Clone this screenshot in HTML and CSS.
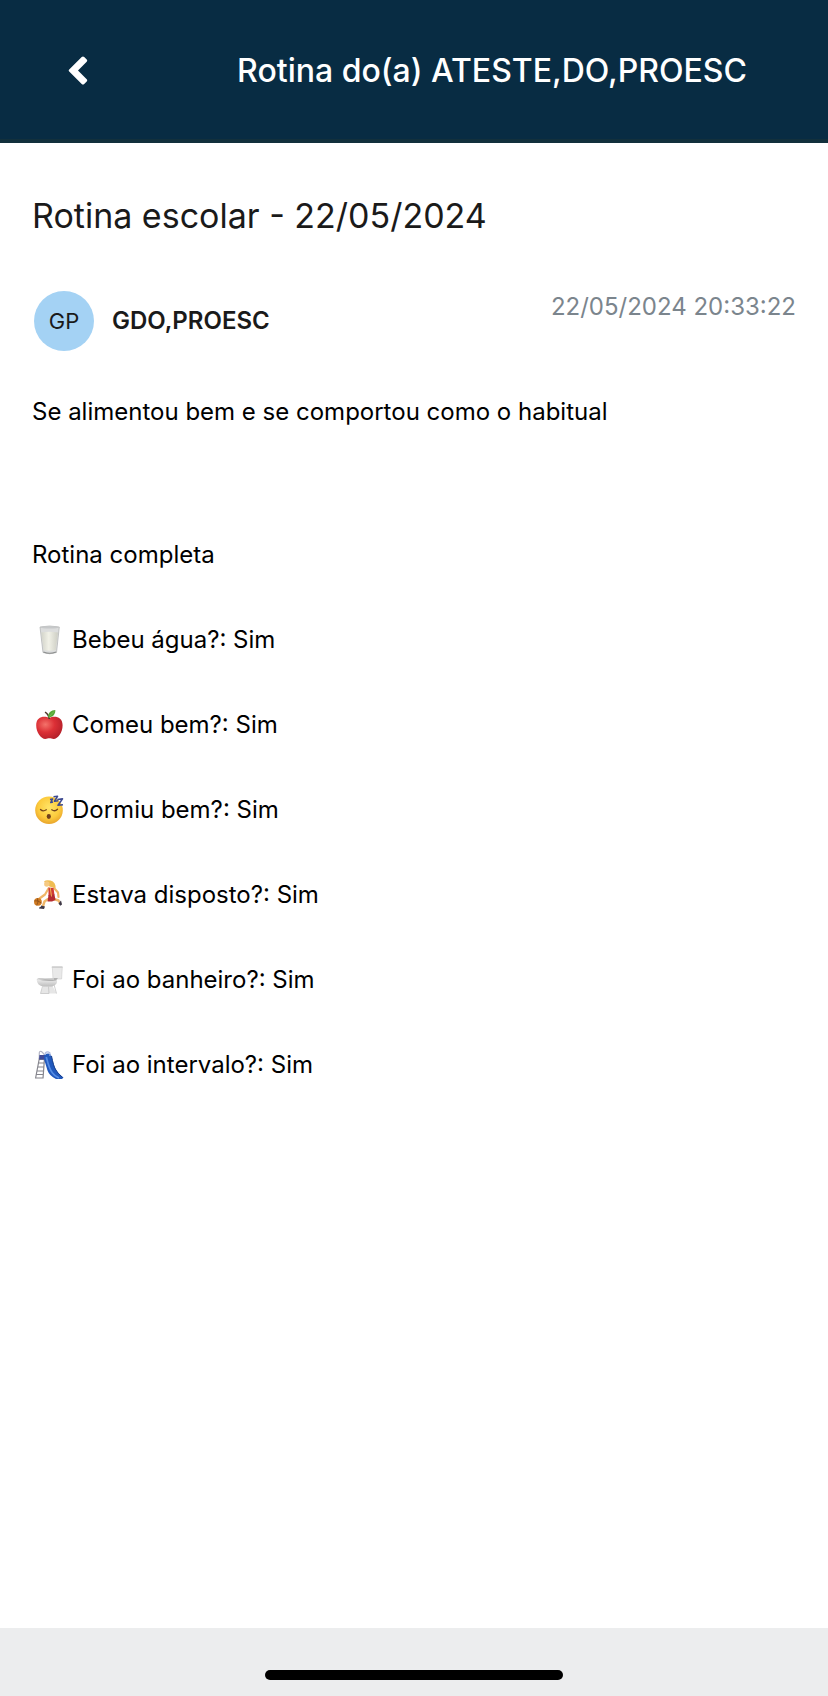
FILE: index.html
```html
<!DOCTYPE html>
<html lang="pt-BR">
<head>
    <meta charset="UTF-8">
    <meta name="viewport" content="width=device-width, initial-scale=1.0">
    <title>Rotina escolar</title>
    <link rel="stylesheet" href="styles.css">
</head>
<body>
    <header class="topbar">
        <button type="button" class="back" aria-label="Voltar">
            <svg width="20" height="30" viewBox="0 0 20 30">
                <path d="M13.700 1Q15 -.2 16.200 1L18.700 3.500Q19.700 4.600 18.700 5.700L10 14.500L18.700 23.300Q19.700 24.400 18.700 25.500L16.200 28Q15 29.200 13.700 28L1.200 15.600Q.2 14.500 1.200 13.400Z" fill="#fff"/>
            </svg>
        </button>
        <h1>Rotina do(a) ATESTE,DO,PROESC</h1>
    </header>

    <main class="content">
        <h2>Rotina escolar - 22/05/2024</h2>

        <div class="author">
            <div class="avatar">GP</div>
            <strong class="name">GDO,PROESC</strong>
            <time class="date" datetime="2024-05-22T20:33:22">22/05/2024 20:33:22</time>
        </div>

        <p class="message">Se alimentou bem e se comportou como o habitual</p>

        <h3>Rotina completa</h3>
        <ul class="routine">
            <li>
                <!-- milk -->
                <svg class="icon" viewBox="0 0 32 32">
                    <defs>
                        <linearGradient id="milk" x1="0" x2="1"><stop offset="0" stop-color="#d2d3c9"/><stop offset=".45" stop-color="#f1f1e7"/><stop offset="1" stop-color="#cdcec4"/></linearGradient>
                    </defs>
                    <path d="M8 3Q17.500 1 27.300 3L24.500 28.500Q17.500 31 11 28.500Z" fill="#dcdddd" stroke="#adafaf" stroke-width=".7"/>
                    <path d="M9.200 8.500Q17.500 7 26 8.500L23.700 26Q17.500 27.500 11.800 26Z" fill="url(#milk)"/>
                    <ellipse cx="17.600" cy="3.300" rx="9.300" ry="1.300" fill="#c6c8c9"/>
                    <path d="M11.500 28Q17.500 30.500 24 28" fill="none" stroke="#8b8d8d" stroke-width="1.200"/>
                </svg>
                Bebeu água?: Sim
            </li>
            <li>
                <!-- apple -->
                <svg class="icon" viewBox="0 0 32 32">
                    <defs>
                        <radialGradient id="apple" cx=".35" cy=".35" r=".7"><stop offset="0" stop-color="#f4726a"/><stop offset=".5" stop-color="#dc3036"/><stop offset="1" stop-color="#b5202a"/></radialGradient>
                    </defs>
                    <path d="M17.300 9C13 6.600 4.200 6.800 4.200 16.300C4.200 23.500 9 30 13.300 30C15 30 15.800 29.300 17.400 29.300C19 29.300 20 30 21.600 30C26 30 30.600 23.500 30.600 16.300C30.600 6.800 21.500 6.600 17.300 9Z" fill="url(#apple)"/>
                    <path d="M13 3.200Q16.500 5 17.300 10" fill="none" stroke="#4e3528" stroke-width="1.500"/>
                    <path d="M16.200 8.500C15.800 3.500 19 1.300 23.300 1C23.600 5 21 8.400 16.200 8.500Z" fill="#57a637"/>
                    <path d="M17.500 7.500Q19.500 5 22 2.500" fill="none" stroke="#83c75a" stroke-width=".7"/>
                </svg>
                Comeu bem?: Sim
            </li>
            <li>
                <!-- sleeping face -->
                <svg class="icon" viewBox="0 0 32 32">
                    <defs>
                        <radialGradient id="face" cx=".5" cy=".4" r=".6"><stop offset="0" stop-color="#ffe466"/><stop offset=".65" stop-color="#fccb3d"/><stop offset="1" stop-color="#e9a52c"/></radialGradient>
                    </defs>
                    <circle cx="17" cy="16.200" r="13.800" fill="url(#face)"/>
                    <path d="M8.500 15.500Q11 18 14.300 15.800M19.800 15.800Q22.800 18 25.500 15.300" fill="none" stroke="#74451b" stroke-width="1.300" stroke-linecap="round"/>
                    <ellipse cx="16.800" cy="22.500" rx="2.100" ry="2.400" fill="#70401c"/>
                    <path d="M18 5.500L20.500 5L18.800 8.500L21 8M21.500 2.800L25.500 2.300L22.500 7.200L26.300 6.700M25.300 5.500L30.500 4.900L26 11.300L31 10.700" fill="none" stroke="#3d4a91" stroke-width="1.600" stroke-linejoin="round"/>
                </svg>
                Dormiu bem?: Sim
            </li>
            <li>
                <!-- player bouncing a ball -->
                <svg class="icon" viewBox="0 0 32 32">
                    <path d="M12 2.500Q14 .5 18.500 1.500Q24 3 23.500 9.500L17.500 7.500Z" fill="#efbd52"/>
                    <circle cx="14.800" cy="5" r="2.700" fill="#f5c982"/>
                    <path d="M16.500 9.500L13 15.500L7.500 19.500M22 9L26 13.500L26.500 18" fill="none" stroke="#f0b667" stroke-width="2.200" stroke-linecap="round" stroke-linejoin="round"/>
                    <path d="M16 20L12.500 22.500L11 27M22 20L26.500 21.500L28.200 24.500" fill="none" stroke="#efb669" stroke-width="2.400" stroke-linecap="round" stroke-linejoin="round"/>
                    <path d="M16.500 8.500L21.500 9L22.500 16L16.500 17Z" fill="#d13b34"/>
                    <path d="M16.500 16L22.500 15.500L23.500 21L20 22.500L15.500 22.500Z" fill="#b52c30"/>
                    <path d="M18.300 9L19.500 17.500" stroke="#efb34f" stroke-width="1"/>
                    <path d="M9 26.500L13 27.500L12 30L7 29.500Q6.500 28.300 9 27.500ZM26.500 24.500L29 21.500L30 25.500L28.300 26.800Z" fill="#3d3848"/>
                    <circle cx="5.900" cy="22.800" r="3.900" fill="#cf7a22"/>
                    <path d="M2.400 21.800Q6 21 9.400 24M5.400 19.200Q7 23 4.700 26.300" fill="none" stroke="#704018" stroke-width=".6"/>
                </svg>
                Estava disposto?: Sim
            </li>
            <li>
                <!-- toilet -->
                <svg class="icon" viewBox="0 0 32 32">
                    <defs>
                        <linearGradient id="bowl" x2="0" y2="1"><stop offset="0" stop-color="#e9e9e9"/><stop offset="1" stop-color="#bdbdbd"/></linearGradient>
                    </defs>
                    <path d="M20.300 3H30.300L29.600 15H21Z" fill="#e9e9e9" stroke="#cdcdcd" stroke-width=".6"/>
                    <path d="M19.800 2.300H30.500V4H19.800Z" fill="#cfcfcf"/>
                    <path d="M10 20H21V23L24.500 29.500H8.500L11 23Z" fill="#e6e6e6"/>
                    <path d="M4.700 16H25Q26 20.500 20 22.500H10.500Q5.200 21 4.700 16Z" fill="url(#bowl)"/>
                    <path d="M4.500 15.200Q6 13.900 11 13.900H26L24 16.500Q14 18 4.500 15.200Z" fill="#b1b1b1"/>
                    <path d="M6 15.300Q12 14.200 22 15" fill="none" stroke="#e4e4e4" stroke-width="1"/>
                    <path d="M10.500 22.500L8.500 29.500H17L16.500 22.500M22 20.500L24.500 29.500" fill="none" stroke="#c4c4c4" stroke-width=".8"/>
                </svg>
                Foi ao banheiro?: Sim
            </li>
            <li>
                <!-- playground slide -->
                <svg class="icon" viewBox="0 0 32 32">
                    <path d="M8 6L3.500 29.500M12.500 9L11 29.500M7 10.500H12M6.300 14H12M5.500 18H11.500M4.700 22H11.500M4 25.500H11M3.500 29H11" fill="none" stroke="#85858d" stroke-width="1.200"/>
                    <path d="M7.300 10V3.700Q7.500 1.800 9.500 2.500L12 5V10" fill="none" stroke="#b3b5c5" stroke-width="1.200"/>
                    <path d="M7.500 6H15V10.500H7Z" fill="#414a96"/>
                    <path d="M12.500 5.500Q18 3 19.500 7Q21.500 16 23.300 19.500Q25 23.500 31.500 28.500L30 30H24Q17.500 27 15.500 21.500L12 10Z" fill="#2159bd"/>
                    <path d="M14.300 8Q17.200 20 20.500 24Q22.500 27 27 29" fill="none" stroke="#558ce3" stroke-width="1.700"/>
                    <path d="M19.500 7Q21.500 17 23.300 20Q25.500 24.500 30.500 28.500" fill="none" stroke="#173e8b" stroke-width="1"/>
                    <path d="M13.300 6V4Q15.500 1.700 18 4V7" fill="none" stroke="#aebae0" stroke-width="1.100"/>
                </svg>
                Foi ao intervalo?: Sim
            </li>
        </ul>
    </main>

    <footer class="homebar">
        <div class="indicator"></div>
    </footer>
</body>
</html>
```
FILE: styles.css
```css
* { box-sizing: border-box; }
body { margin: 0; min-height: 100vh; display: flex; flex-direction: column; background: #fff; color: #000; font-family: Inter, "Liberation Sans", sans-serif; font-size: 24px; line-height: 32px; }
h1, h2, h3, p, ul { margin: 0; padding: 0; font-weight: 400; }

.topbar { display: flex; align-items: center; background: #082c43; color: #fff; padding: 51px 32px 48px; border-bottom: 4px solid #12303c; }
.topbar h1 { flex: 1; padding-left: 64px; text-align: center; font-size: 32px; line-height: 40px; font-weight: 500; }
.back { display: flex; justify-content: center; align-items: center; width: 92px; height: 40px; padding: 0; border: none; background: none; cursor: pointer; }

.content { flex: 1; padding: 49px 32px; }
h2 { font-size: 34px; line-height: 48px; color: #1a1a1a; }
h3 { margin-top: 111px; font-size: 24px; line-height: 32px; }
.author { display: flex; align-items: center; gap: 18px; margin-top: 51px; padding-left: 2px; color: #1a1a1a; }
.avatar { display: flex; align-items: center; justify-content: center; width: 60px; height: 60px; border-radius: 50%; background: #a4d2f4; font-size: 22px; }
.name { font-weight: 600; }
.date { align-self: flex-start; margin-left: auto; color: #7b858d; }
.message { margin-top: 45px; }

.routine { list-style: none; }
.routine li { display: flex; align-items: center; gap: 8px; margin-top: 53px; }
.icon { width: 32px; height: 32px; flex: none; }

.homebar { background: #ecedee; padding: 42px 0 16px; }
.indicator { width: 36%; height: 10px; margin: 0 auto; border-radius: 5px; background: #000; }
```
